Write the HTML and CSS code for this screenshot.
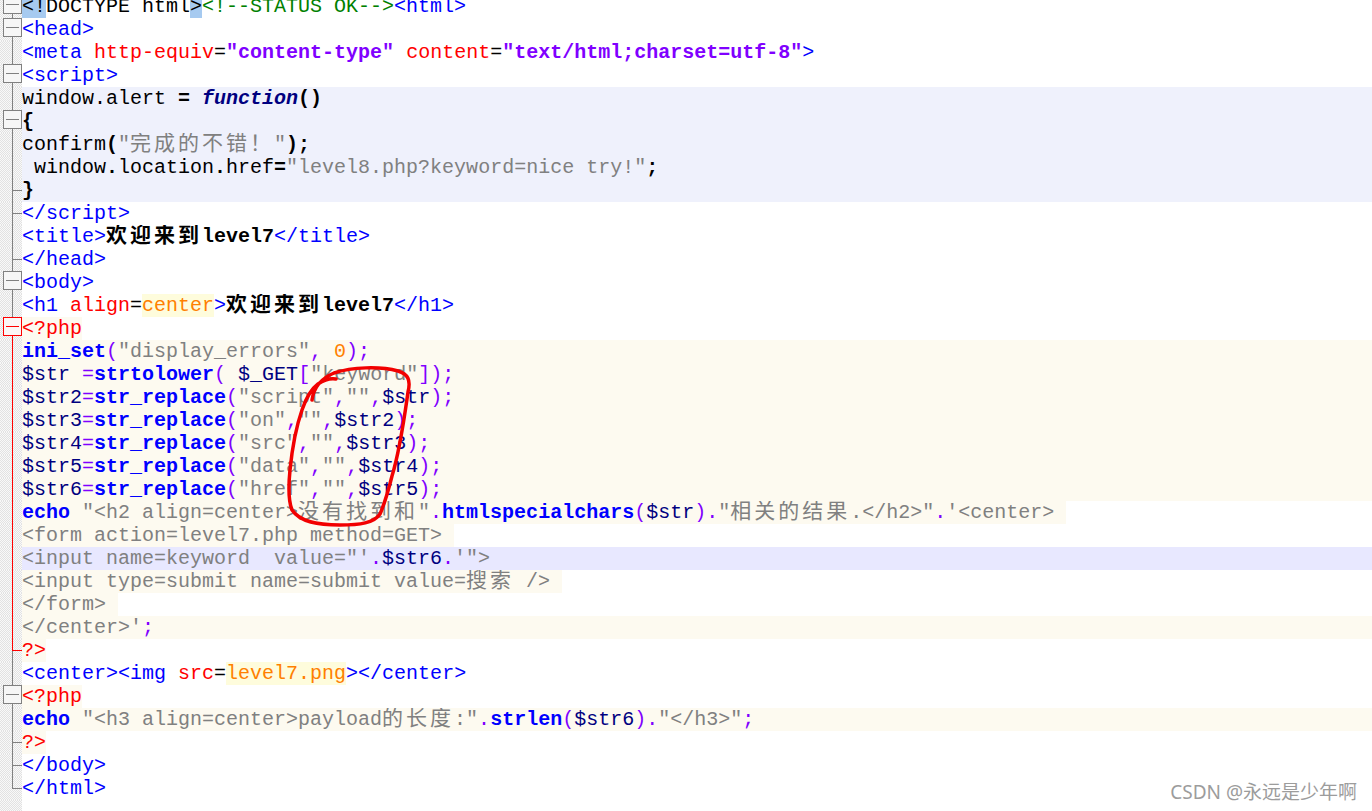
FILE: index.html
```html
<!DOCTYPE html>
<html lang="zh">
<head>
<meta charset="utf-8">
<title>level7.php</title>
<link rel="stylesheet" href="styles.css">
</head>
<body>
<div class="editor">
  <div class="ln"><div class="fm bx"><i></i></div><div class="code"><span class="bm">&lt;!</span>DOCTYPE html<span class="bm">&gt;</span><span class="cm">&lt;!--STATUS OK--&gt;</span><span class="t">&lt;html&gt;</span></div></div>
  <div class="ln"><div class="fm bx"><i></i></div><div class="code"><span class="t">&lt;head&gt;</span></div></div>
  <div class="ln"><div class="fm v"></div><div class="code"><span class="t">&lt;meta</span> <span class="a">http-equiv</span>=<span class="dq">"content-type"</span> <span class="a">content</span>=<span class="dq">"text/html;charset=utf-8"</span><span class="t">&gt;</span></div></div>
  <div class="ln"><div class="fm bx"><i></i></div><div class="code"><span class="t">&lt;script&gt;</span></div></div>
  <div class="ln"><div class="fm v"></div><div class="code js">window.alert <b>=</b> <span class="kw">function</span><b>()</b></div></div>
  <div class="ln"><div class="fm bx"><i></i></div><div class="code js"><b>{</b></div></div>
  <div class="ln"><div class="fm v"></div><div class="code js">confirm<b>(</b><span class="s">"<span class="cj">完成的不错！</span>"</span><b>);</b></div></div>
  <div class="ln"><div class="fm v"></div><div class="code js"> window<b>.</b>location<b>.</b>href<b>=</b><span class="s">"level8.php?keyword=nice try!"</span><b>;</b></div></div>
  <div class="ln"><div class="fm tk"></div><div class="code js"><b>}</b></div></div>
  <div class="ln"><div class="fm tk"></div><div class="code"><span class="t">&lt;/script&gt;</span></div></div>
  <div class="ln"><div class="fm v"></div><div class="code"><span class="t">&lt;title&gt;</span><b><span class="cj">欢迎来到</span>level7</b><span class="t">&lt;/title&gt;</span></div></div>
  <div class="ln"><div class="fm tk"></div><div class="code"><span class="t">&lt;/head&gt;</span></div></div>
  <div class="ln"><div class="fm bx"><i></i></div><div class="code"><span class="t">&lt;body&gt;</span></div></div>
  <div class="ln"><div class="fm v"></div><div class="code"><span class="t">&lt;h1</span> <span class="a">align</span>=<span class="uv">center</span><span class="t">&gt;</span><b><span class="cj">欢迎来到</span>level7</b><span class="t">&lt;/h1&gt;</span></div></div>
  <div class="ln"><div class="fm bxr"><i></i></div><div class="code"><span class="hl"><span class="pt">&lt;?php</span></span></div></div>
  <div class="ln"><div class="fm vr"></div><div class="code php"><span class="pk">ini_set</span><span class="po">(</span><span class="ps">"display_errors"</span><span class="po">,</span> <span class="pn">0</span><span class="po">);</span></div></div>
  <div class="ln"><div class="fm vr"></div><div class="code php"><span class="pv">$str</span> <span class="po">=</span><span class="pk">strtolower</span><span class="po">(</span> <span class="pv">$_GET</span><span class="po">[</span><span class="ps">"keyword"</span><span class="po">]);</span></div></div>
  <div class="ln"><div class="fm vr"></div><div class="code php"><span class="pv">$str2</span><span class="po">=</span><span class="pk">str_replace</span><span class="po">(</span><span class="ps">"script"</span><span class="po">,</span><span class="ps">""</span><span class="po">,</span><span class="pv">$str</span><span class="po">);</span></div></div>
  <div class="ln"><div class="fm vr"></div><div class="code php"><span class="pv">$str3</span><span class="po">=</span><span class="pk">str_replace</span><span class="po">(</span><span class="ps">"on"</span><span class="po">,</span><span class="ps">""</span><span class="po">,</span><span class="pv">$str2</span><span class="po">);</span></div></div>
  <div class="ln"><div class="fm vr"></div><div class="code php"><span class="pv">$str4</span><span class="po">=</span><span class="pk">str_replace</span><span class="po">(</span><span class="ps">"src"</span><span class="po">,</span><span class="ps">""</span><span class="po">,</span><span class="pv">$str3</span><span class="po">);</span></div></div>
  <div class="ln"><div class="fm vr"></div><div class="code php"><span class="pv">$str5</span><span class="po">=</span><span class="pk">str_replace</span><span class="po">(</span><span class="ps">"data"</span><span class="po">,</span><span class="ps">""</span><span class="po">,</span><span class="pv">$str4</span><span class="po">);</span></div></div>
  <div class="ln"><div class="fm vr"></div><div class="code php"><span class="pv">$str6</span><span class="po">=</span><span class="pk">str_replace</span><span class="po">(</span><span class="ps">"href"</span><span class="po">,</span><span class="ps">""</span><span class="po">,</span><span class="pv">$str5</span><span class="po">);</span></div></div>
  <div class="ln"><div class="fm vr"></div><div class="code"><span class="hl"><span class="pk">echo</span> <span class="ps">"&lt;h2 align=center&gt;<span class="cj">没有找到和</span>"</span><span class="po">.</span><span class="pk">htmlspecialchars</span><span class="po">(</span><span class="pv">$str</span><span class="po">).</span><span class="ps">"<span class="cj">相关的结果</span>.&lt;/h2&gt;"</span><span class="po">.</span><span class="ps">'&lt;center&gt; </span></span></div></div>
  <div class="ln"><div class="fm vr"></div><div class="code"><span class="hl"><span class="ps">&lt;form action=level7.php method=GET&gt; </span></span></div></div>
  <div class="ln"><div class="fm vr"></div><div class="code cur"><span class="ps">&lt;input name=keyword  value="'</span><span class="po">.</span><span class="pv">$str6</span><span class="po">.</span><span class="ps">'"&gt;</span></div></div>
  <div class="ln"><div class="fm vr"></div><div class="code"><span class="hl"><span class="ps">&lt;input type=submit name=submit value=<span class="cj">搜索</span> /&gt; </span></span></div></div>
  <div class="ln"><div class="fm vr"></div><div class="code"><span class="hl"><span class="ps">&lt;/form&gt; </span></span></div></div>
  <div class="ln"><div class="fm vr"></div><div class="code php"><span class="ps">&lt;/center&gt;'</span><span class="po">;</span></div></div>
  <div class="ln"><div class="fm endr"></div><div class="code"><span class="hl"><span class="pt">?&gt;</span></span></div></div>
  <div class="ln"><div class="fm v"></div><div class="code"><span class="t">&lt;center&gt;&lt;img</span> <span class="a">src</span>=<span class="uv">level7.png</span><span class="t">&gt;&lt;/center&gt;</span></div></div>
  <div class="ln"><div class="fm bx"><i></i></div><div class="code"><span class="hl"><span class="pt">&lt;?php</span></span></div></div>
  <div class="ln"><div class="fm v"></div><div class="code php"><span class="pk">echo</span> <span class="ps">"&lt;h3 align=center&gt;payload<span class="cj">的长度</span>:"</span><span class="po">.</span><span class="pk">strlen</span><span class="po">(</span><span class="pv">$str6</span><span class="po">).</span><span class="ps">"&lt;/h3&gt;"</span><span class="po">;</span></div></div>
  <div class="ln"><div class="fm tk"></div><div class="code"><span class="hl"><span class="pt">?&gt;</span></span></div></div>
  <div class="ln"><div class="fm tk"></div><div class="code"><span class="t">&lt;/body&gt;</span></div></div>
  <div class="ln"><div class="fm end"></div><div class="code"><span class="t">&lt;/html&gt;</span></div></div>
  <div class="ln fill"><div class="fm"></div><div class="code"></div></div>
</div>

<svg class="scribble" width="1372" height="811" viewBox="0 0 1372 811" aria-hidden="true">
  <path d="M 312 400 C 314 386, 322 378, 334 373 C 352 367, 380 366, 398 371 C 408 374, 411 380, 408 392 C 404 420, 400 450, 392 476 C 388 492, 384 505, 380 514 C 374 523, 360 525, 340 525 C 318 525, 300 522, 292 510 C 288 500, 289 480, 290 470 C 292 450, 295 430, 302 410 C 306 398, 310 390, 318 384 C 324 380, 330 378, 336 379"/>
</svg>

<div class="watermark">CSDN @永远是少年啊</div>
</body>
</html>
```

FILE: styles.css
```css
html, body {
  margin: 0;
  padding: 0;
  background: #ffffff;
}

body {
  position: relative;
  width: 1372px;
  height: 811px;
  overflow: hidden;
  font-family: "Liberation Mono", "Noto Sans CJK SC", monospace;
  font-size: 20px;
  color: #000000;
}

.editor {
  display: flex;
  flex-direction: column;
  height: 816px;
  margin-top: -5px;
}

.ln {
  display: flex;
  height: 23px;
  line-height: 23px;
  flex: none;
}

.ln.fill {
  flex: 1;
}

/* fold margin */
.fm {
  --mk: none;
  width: 22px;
  flex: none;
  background:
    var(--mk),
    repeating-conic-gradient(#e2e2e2 0% 25%, #f9f9f9 0% 50%) 0 0 / 2px 2px;
}

.fm i {
  display: block;
  box-sizing: border-box;
  width: 19px;
  height: 19px;
  margin-left: 3px;
  border: 1px solid #808080;
  background:
    linear-gradient(#808080, #808080) center / 13px 1px no-repeat,
    #f6f6f6;
}

.fm.bx {
  --mk: linear-gradient(#808080, #808080) 12px 19px / 1px 4px no-repeat;
}

.fm.bxr {
  --mk: linear-gradient(#ff0000, #ff0000) 12px 19px / 1px 4px no-repeat;
}

.fm.bxr i {
  border-color: #ff0000;
  background:
    linear-gradient(#ff0000, #ff0000) center / 13px 1px no-repeat,
    #fbf6f6;
}

.fm.v {
  --mk: linear-gradient(#808080, #808080) 12px 0 / 1px 100% no-repeat;
}

.fm.vr {
  --mk: linear-gradient(#ff0000, #ff0000) 12px 0 / 1px 100% no-repeat;
}

.fm.tk {
  --mk:
    linear-gradient(#808080, #808080) 12px 11px / 10px 1px no-repeat,
    linear-gradient(#808080, #808080) 12px 0 / 1px 100% no-repeat;
}

.fm.end {
  --mk:
    linear-gradient(#808080, #808080) 12px 11px / 10px 1px no-repeat,
    linear-gradient(#808080, #808080) 12px 0 / 1px 12px no-repeat;
}

.fm.endr {
  --mk:
    linear-gradient(#ff0000, #ff0000) 12px 11px / 10px 1px no-repeat,
    linear-gradient(#ff0000, #ff0000) 12px 0 / 1px 12px no-repeat,
    linear-gradient(#808080, #808080) 12px 12px / 1px 11px no-repeat;
}

/* code area */
.code {
  flex: 1;
  white-space: pre;
  overflow: hidden;
}

.code.js {
  background: #eff1fc;
}

.code.php {
  background: #fdfaf0;
}

.code.cur {
  background: #e8e8ff;
}

.hl {
  display: inline-block;
  height: 23px;
  vertical-align: top;
  background: #fdfaf0;
}

.bm {
  display: inline-block;
  height: 23px;
  vertical-align: top;
  background: #a6caf0;
}

.cj {
  font-family: "Noto Sans CJK SC", sans-serif;
  font-size: 21px;
  line-height: 0;
  letter-spacing: 3px;
}

/* html */
.t { color: #0000ff; }
.a { color: #ff0000; }
.dq { color: #8000ff; font-weight: bold; }
.cm { color: #008000; }
.uv {
  display: inline-block;
  height: 23px;
  vertical-align: top;
  color: #ff8000;
  background: #fefcdc;
}

/* javascript */
.kw { color: #000080; font-weight: bold; font-style: italic; }
.s { color: #808080; }

/* php */
.pt { color: #ff0000; }
.pk { color: #0000ff; font-weight: bold; }
.po { color: #8000ff; }
.pv { color: #000080; }
.ps { color: #808080; }
.pn { color: #ff8000; }

/* overlays */
.scribble {
  position: absolute;
  left: 0;
  top: 0;
  pointer-events: none;
}

.scribble path {
  fill: none;
  stroke: #f20000;
  stroke-width: 3.5;
  stroke-linecap: round;
  stroke-linejoin: round;
}

.watermark {
  position: absolute;
  right: 15px;
  bottom: 9px;
  font-family: "Noto Sans", "Noto Sans CJK SC", sans-serif;
  font-size: 19px;
  line-height: 19px;
  color: #9c9c9c;
  text-shadow: 0 0 1px #ffffff;
}
```
